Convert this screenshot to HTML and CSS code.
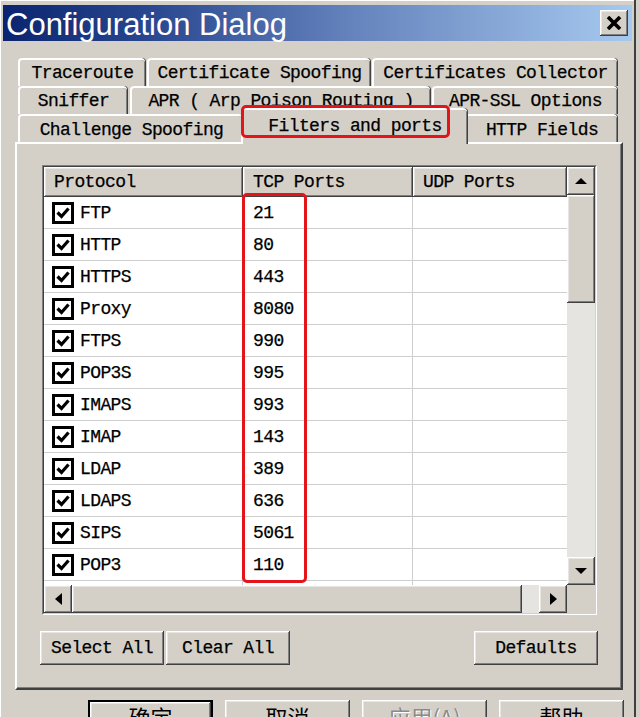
FILE: index.html
```html
<!DOCTYPE html>
<html>
<head>
<meta charset="utf-8">
<link rel="stylesheet" href="styles.css">
</head>
<body>
<svg width="0" height="0" class="defs">
  <symbol id="cbx" viewBox="0 0 22 22">
    <rect x="1.5" y="1.5" width="19" height="19" fill="#fff" stroke="#000" stroke-width="3"/>
    <path d="M5.5 10.5 L9.5 14.5 L16.5 6.5" fill="none" stroke="#000" stroke-width="3.2"/>
  </symbol>
</svg>
<div class="window">
  <div class="titlebar">
    <span class="title">Configuration Dialog</span>
    <div class="close bevel">
      <svg width="16" height="14" viewBox="0 0 16 14"><path d="M2 1 L14 13 M14 1 L2 13" stroke="#000" stroke-width="3.6"/></svg>
    </div>
  </div>

  <div class="tabs">
    <div class="tab-row">
      <div class="tab w-trace">Traceroute</div>
      <div class="tab w-certsp">Certificate Spoofing</div>
      <div class="tab w-certcol">Certificates Collector</div>
    </div>
    <div class="tab-row">
      <div class="tab w-sniff">Sniffer</div>
      <div class="tab w-apr">APR ( Arp Poison Routing )</div>
      <div class="tab w-aprssl">APR-SSL Options</div>
    </div>
    <div class="tab-row">
      <div class="tab w-chal">Challenge Spoofing</div>
      <div class="tab active">Filters and ports</div>
      <div class="tab w-http">HTTP Fields</div>
    </div>
  </div>

  <div class="panel">
    <div class="list">
      <div class="list-inner">
        <div class="lv">
          <div class="lv-header">
            <div class="hcell bevel">Protocol</div>
            <div class="hcell bevel">TCP Ports</div>
            <div class="hcell bevel">UDP Ports</div>
          </div>
          <div class="lv-row"><div class="c1"><svg class="cb"><use href="#cbx"/></svg>FTP</div><div class="c2">21</div><div class="c3"></div></div>
          <div class="lv-row"><div class="c1"><svg class="cb"><use href="#cbx"/></svg>HTTP</div><div class="c2">80</div><div class="c3"></div></div>
          <div class="lv-row"><div class="c1"><svg class="cb"><use href="#cbx"/></svg>HTTPS</div><div class="c2">443</div><div class="c3"></div></div>
          <div class="lv-row"><div class="c1"><svg class="cb"><use href="#cbx"/></svg>Proxy</div><div class="c2">8080</div><div class="c3"></div></div>
          <div class="lv-row"><div class="c1"><svg class="cb"><use href="#cbx"/></svg>FTPS</div><div class="c2">990</div><div class="c3"></div></div>
          <div class="lv-row"><div class="c1"><svg class="cb"><use href="#cbx"/></svg>POP3S</div><div class="c2">995</div><div class="c3"></div></div>
          <div class="lv-row"><div class="c1"><svg class="cb"><use href="#cbx"/></svg>IMAPS</div><div class="c2">993</div><div class="c3"></div></div>
          <div class="lv-row"><div class="c1"><svg class="cb"><use href="#cbx"/></svg>IMAP</div><div class="c2">143</div><div class="c3"></div></div>
          <div class="lv-row"><div class="c1"><svg class="cb"><use href="#cbx"/></svg>LDAP</div><div class="c2">389</div><div class="c3"></div></div>
          <div class="lv-row"><div class="c1"><svg class="cb"><use href="#cbx"/></svg>LDAPS</div><div class="c2">636</div><div class="c3"></div></div>
          <div class="lv-row"><div class="c1"><svg class="cb"><use href="#cbx"/></svg>SIPS</div><div class="c2">5061</div><div class="c3"></div></div>
          <div class="lv-row"><div class="c1"><svg class="cb"><use href="#cbx"/></svg>POP3</div><div class="c2">110</div><div class="c3"></div></div>
          <div class="lv-row"><div class="c1"><svg class="cb"><use href="#cbx"/></svg></div><div class="c2"></div><div class="c3"></div></div>
        </div>
        <div class="vscroll">
          <div class="sbtn bevel"><svg width="12" height="6" viewBox="0 0 12 6"><path d="M0 6 L6 0 L12 6Z"/></svg></div>
          <div class="vthumb bevel"></div>
          <div class="track"></div>
          <div class="sbtn bevel"><svg width="12" height="6" viewBox="0 0 12 6"><path d="M0 0 L6 6 L12 0Z"/></svg></div>
        </div>
        <div class="hscroll">
          <div class="sbtn bevel"><svg width="7" height="12" viewBox="0 0 7 12"><path d="M7 0 L0 6 L7 12Z"/></svg></div>
          <div class="hthumb bevel"></div>
          <div class="track"></div>
          <div class="sbtn bevel"><svg width="7" height="12" viewBox="0 0 7 12"><path d="M0 0 L7 6 L0 12Z"/></svg></div>
        </div>
        <div class="corner"></div>
      </div>
    </div>
    <div class="panel-buttons">
      <div class="btn bevel">Select All</div>
      <div class="btn bevel">Clear All</div>
      <div class="btn bevel push-right">Defaults</div>
    </div>
  </div>

  <div class="dialog-buttons">
    <div class="dbtn default"><div class="dbtn-in bevel">确定</div></div>
    <div class="dbtn bevel">取消</div>
    <div class="dbtn bevel disabled">应用(A)</div>
    <div class="dbtn bevel">帮助</div>
  </div>
</div>

<div class="mark mark-tab"></div>
<div class="mark mark-ports"></div>
</body>
</html>
```
FILE: styles.css
```css
* { box-sizing: border-box; }
html, body { margin: 0; padding: 0; }
body {
  width: 640px;
  height: 717px;
  overflow: hidden;
  position: relative;
  background: #d4d0c8;
  font-family: "Liberation Mono", "DejaVu Sans Mono", monospace;
  font-size: 18px;
  letter-spacing: -0.6px;
  color: #000;
  -webkit-text-stroke: 0.25px #000;
}
.defs { position: absolute; }

.window {
  width: 636px;
  height: 717px;
  padding: 5px 0 0 3px;
  background: #d4d0c8;
  border-right: 2px solid #404040;
  box-shadow: inset 1px 1px 0 #fff;
}

.bevel {
  background: #d4d0c8;
  box-shadow: inset -1px -1px 0 #404040, inset 1px 1px 0 #fff, inset -2px -2px 0 #808080, inset 2px 2px 0 #e8e6e2;
}

.titlebar {
  width: 629px;
  height: 36px;
  display: flex;
  align-items: center;
  justify-content: space-between;
  padding: 0 4px 0 3px;
  background: linear-gradient(90deg, #0b2470 0%, #2b4a92 25%, #6482bc 55%, #a6c9ef 100%);
}
.title {
  color: #fff;
  font-family: "Liberation Sans", "DejaVu Sans", sans-serif;
  font-size: 31px;
  letter-spacing: 0;
  line-height: 36px;
  padding-top: 3px;
  -webkit-text-stroke: 0;
}
.close {
  width: 28px;
  height: 26px;
  display: flex;
  align-items: center;
  justify-content: center;
}

.tabs {
  margin: 17px 0 0 12px;
  width: 608px;
  padding-left: 3px;
  position: relative;
  z-index: 2;
}
.tab-row { display: flex; height: 28px; }
.tab {
  height: 28px;
  display: flex;
  align-items: center;
  justify-content: center;
  background: #d4d0c8;
  border-top: 2px solid #fff;
  border-left: 2px solid #fff;
  border-radius: 4px 4px 0 0;
  box-shadow: inset -1px 0 0 #808080, 1px 0 0 #404040;
  white-space: nowrap;
  flex: none;
}
.w-trace { width: 127px; margin-right: 2px; }
.w-certsp { width: 223px; margin-right: 2px; }
.w-certcol { width: 245px; }
.w-sniff { width: 109px; margin-right: 3px; }
.w-apr { width: 300px; margin-right: 2px; }
.w-aprssl { width: 185px; }
.w-chal { width: 225px; padding-top: 2px; }
.w-http { width: 152px; padding-top: 2px; }
.tab.active {
  width: 226px;
  height: 36px;
  margin: -6px -2px 0 -2px;
  padding-bottom: 2px;
  position: relative;
  z-index: 3;
}

.panel {
  margin-left: 12px;
  width: 608px;
  height: 548px;
  background: #d4d0c8;
  border-top: 2px solid #fff;
  border-left: 2px solid #fff;
  border-right: 2px solid #404040;
  border-bottom: 2px solid #404040;
  box-shadow: inset -1px -1px 0 #808080;
  padding: 21px 0 0 25px;
  position: relative;
  z-index: 1;
}

.list {
  width: 555px;
  height: 450px;
  border: 1px solid;
  border-color: #808080 #fff #fff #808080;
}
.list-inner {
  width: 553px;
  height: 448px;
  border: 1px solid;
  border-color: #404040 #d4d0c8 #d4d0c8 #404040;
  display: grid;
  grid-template-columns: 523px 28px;
  grid-template-rows: 418px 28px;
  background: #fff;
}
.lv { overflow: hidden; background: #fff; }
.lv-header {
  display: grid;
  grid-template-columns: 199px 170px 154px;
  height: 30px;
}
.hcell {
  display: flex;
  align-items: center;
  padding-left: 10px;
  white-space: nowrap;
}
.lv-row {
  display: grid;
  grid-template-columns: 199px 170px 154px;
  height: 32px;
  border-bottom: 1px solid #cfcfcf;
}
.lv-row > div { display: flex; align-items: center; }
.c1 { padding-left: 8px; gap: 6px; border-right: 1px solid #cfcfcf; }
.c2 { padding-left: 10px; border-right: 1px solid #cfcfcf; }
.cb { width: 22px; height: 22px; flex: none; }

.vscroll { display: flex; flex-direction: column; background: #d4d0c8; }
.hscroll { display: flex; background: #d4d0c8; }
.sbtn {
  width: 28px;
  height: 28px;
  flex: none;
  display: flex;
  align-items: center;
  justify-content: center;
}
.sbtn svg { fill: #000; }
.vthumb { height: 108px; flex: none; }
.hthumb { width: 450px; flex: none; }
.track { flex: 1; background: #e6e4e0; }
.corner { background: #d4d0c8; }

.panel-buttons {
  display: flex;
  gap: 2px;
  width: 558px;
  margin: 16px 0 0 -2px;
}
.btn {
  width: 124px;
  height: 34px;
  display: flex;
  align-items: center;
  justify-content: center;
  white-space: nowrap;
}
.push-right { margin-left: auto; }

.dialog-buttons {
  display: flex;
  gap: 12px;
  margin: 10px 0 0 85px;
}
.dbtn {
  width: 125px;
  height: 36px;
  display: flex;
  align-items: center;
  justify-content: center;
  font-family: "Noto Sans CJK SC", "Liberation Sans", sans-serif;
  font-size: 22px;
  letter-spacing: 0;
  -webkit-text-stroke: 0;
  padding-bottom: 4px;
}
.dbtn.default { border: 2px solid #000; padding-bottom: 0; }
.dbtn-in {
  width: 100%;
  height: 100%;
  display: flex;
  align-items: center;
  justify-content: center;
  padding-bottom: 4px;
}
.dbtn.disabled { color: #8a8a8a; text-shadow: 1px 1px 0 #fff; }

.mark {
  position: absolute;
  border: 3px solid #e3151a;
  border-radius: 5px;
  z-index: 10;
}
.mark-tab { left: 241px; top: 105px; width: 209px; height: 33px; }
.mark-ports { left: 242px; top: 193px; width: 65px; height: 390px; }
```
